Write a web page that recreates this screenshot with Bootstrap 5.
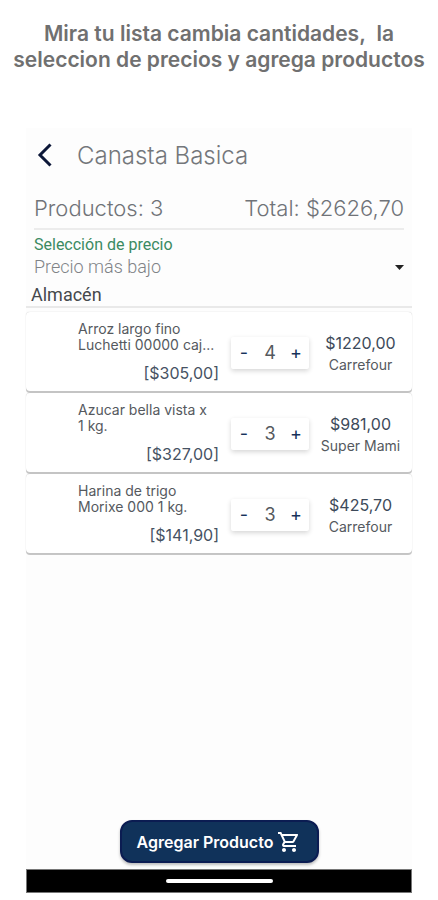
<!DOCTYPE html>
<html lang="es">
<head>
<meta charset="utf-8">
<meta name="viewport" content="width=device-width, initial-scale=1">
<title>Canasta Basica</title>
<link href="https://cdn.jsdelivr.net/npm/bootstrap@5.3.0/dist/css/bootstrap.min.css" rel="stylesheet">
<style>
body { font-family: Inter, "Liberation Sans", sans-serif; background: #fff; color: #5f6368; }
.page { padding-bottom: 7px; }
.headline { font-size: 21px; line-height: 26px; font-weight: 600; color: #707070; padding-top: 21px; margin-bottom: 55px; white-space: pre-line; }
.phone { margin: 0 26px; background: #fdfdfd; }
.topbar { height: 56px; padding-left: 10px; gap: 23px; }
.back { width: 18px; height: 26px; line-height: 0; }
.title { font-size: 24px; line-height: 30px; font-weight: 300; color: #74777b; }
.totals { margin: 0 8px; height: 46px; padding-top: 10px; font-size: 22px; line-height: 28px; font-weight: 300; color: #707378; border-bottom: 2px solid #ececec; }
.price-mode { margin: 0 8px; padding-top: 5px; font-family: Roboto, sans-serif; }
.price-mode label { font-size: 16px; line-height: 20px; color: #3b8a62; }
.price-mode select { appearance: none; font-size: 18px; line-height: 24px; color: #808387; font-weight: 300; }
.section-name { font-family: Roboto, sans-serif; font-size: 18px; line-height: 22px; padding: 5px 5px 0; color: #45484c; border-bottom: 2px solid #e9e9e9; margin-bottom: 4px; }
.item { height: 79px; margin-bottom: 2px; background: #fff; border-radius: 4px; box-shadow: 0 0 1px #bbb, 0 2px 0 #c6c6c6; padding: 9px 0 6px 52px; }
.desc { width: 141px; }
.item-name { font-size: 14px; line-height: 16px; height: 32px; color: #55595e; }
.unit { font-size: 16px; line-height: 24px; color: #465263; margin-top: 8px; }
.qty { width: 78px; height: 32px; margin-left: 12px; background: #fff; border-radius: 2px; box-shadow: 0 2px 5px #d6d6d6; color: #55595e; }
.qty button { width: 26px; font-size: 18px; line-height: 30px; color: #17325a; }
.qty output { font-size: 18px; line-height: 30px; }
.store { font-size: 14px; line-height: 20px; color: #55595e; }
.amount { font-size: 16px; line-height: 24px; color: #3d4a5a; }
.add { background: #10325a; color: #fff; border: 2px solid #0b1c52; border-radius: 12px; height: 43px; width: 199px; font-size: 16px; font-weight: 600; gap: 4px; margin-bottom: 6px; box-shadow: 0 2px 3px #bbb; }
.sysbar { height: 24px; background: #000; border: 1px solid #777; }
.pill { width: 107px; height: 4px; background: #fff; }
</style>
</head>
<body>
<div class="page d-flex flex-column min-vh-100">
  <h1 class="headline text-center">Mira tu lista cambia cantidades,&nbsp; la
seleccion de precios y agrega productos</h1>
  <main class="phone d-flex flex-column flex-grow-1">
    <header class="topbar d-flex align-items-center">
      <button type="button" class="back btn p-0 border-0" aria-label="Volver"><svg width="18" height="26" viewBox="0 0 18 26" fill="none" stroke="#0c1738" stroke-width="3"><path d="M14.500 1.500 4 12l10.500 10.500"/></svg></button>
      <h2 class="title mb-0">Canasta Basica</h2>
    </header>
    <div class="totals d-flex justify-content-between"><span>Productos: 3</span><span>Total: $2626,70</span></div>
    <div class="price-mode">
      <label for="mode" class="d-block">Selección de precio</label>
      <div class="d-flex align-items-center">
        <select id="mode" class="border-0 bg-transparent p-0 flex-grow-1"><option>Precio más bajo</option></select>
        <svg width="9" height="5" viewBox="0 0 9 5" class="pe-none"><path d="M0 0h9L4.500 5z" fill="#222"/></svg>
      </div>
    </div>
    <h3 class="section-name fw-normal">Almacén</h3>
    <section>
      <article class="item d-flex">
        <div class="desc"><div class="item-name">Arroz largo fino<br>Luchetti 00000 caj...</div><div class="unit text-end">[$305,00]</div></div>
        <div class="qty d-flex align-items-center justify-content-between align-self-center"><button type="button" class="btn p-0 border-0" aria-label="Quitar">-</button><output>4</output><button type="button" class="btn p-0 border-0" aria-label="Sumar">+</button></div>
        <div class="flex-grow-1 text-center align-self-center"><div class="amount">$1220,00</div><div class="store">Carrefour</div></div>
      </article>
      <article class="item d-flex">
        <div class="desc"><div class="item-name">Azucar bella vista x<br>1 kg.</div><div class="unit text-end">[$327,00]</div></div>
        <div class="qty d-flex align-items-center justify-content-between align-self-center"><button type="button" class="btn p-0 border-0" aria-label="Quitar">-</button><output>3</output><button type="button" class="btn p-0 border-0" aria-label="Sumar">+</button></div>
        <div class="flex-grow-1 text-center align-self-center"><div class="amount">$981,00</div><div class="store">Super Mami</div></div>
      </article>
      <article class="item d-flex">
        <div class="desc"><div class="item-name">Harina de trigo<br>Morixe 000 1 kg.</div><div class="unit text-end">[$141,90]</div></div>
        <div class="qty d-flex align-items-center justify-content-between align-self-center"><button type="button" class="btn p-0 border-0" aria-label="Quitar">-</button><output>3</output><button type="button" class="btn p-0 border-0" aria-label="Sumar">+</button></div>
        <div class="flex-grow-1 text-center align-self-center"><div class="amount">$425,70</div><div class="store">Carrefour</div></div>
      </article>
    </section>
    <button type="button" class="add btn p-0 mt-auto mx-auto d-flex align-items-center justify-content-center">Agregar Producto<svg width="24" height="24" viewBox="0 0 24 24" fill="#fff"><path d="M15.550 13c.75 0 1.410-.41 1.750-1.030l3.580-6.490A.996.996 0 0 0 20.010 4H5.210l-.94-2H1v2h2l3.600 7.590-1.350 2.440C4.520 15.370 5.480 17 7 17h12v-2H7l1.100-2h7.450zM6.160 6h12.150l-2.760 5H8.530L6.160 6zM7 18c-1.100 0-1.990.9-1.990 2S5.900 22 7 22s2-.9 2-2-.9-2-2-2zm10 0c-1.100 0-1.990.9-1.990 2s.89 2 1.990 2 2-.9 2-2-.9-2-2-2z"/></svg></button>
    <div class="sysbar d-flex align-items-center justify-content-center"><div class="pill rounded-pill"></div></div>
  </main>
</div>
<script src="https://cdn.jsdelivr.net/npm/bootstrap@5.3.0/dist/js/bootstrap.bundle.min.js"></script>
</body>
</html>
